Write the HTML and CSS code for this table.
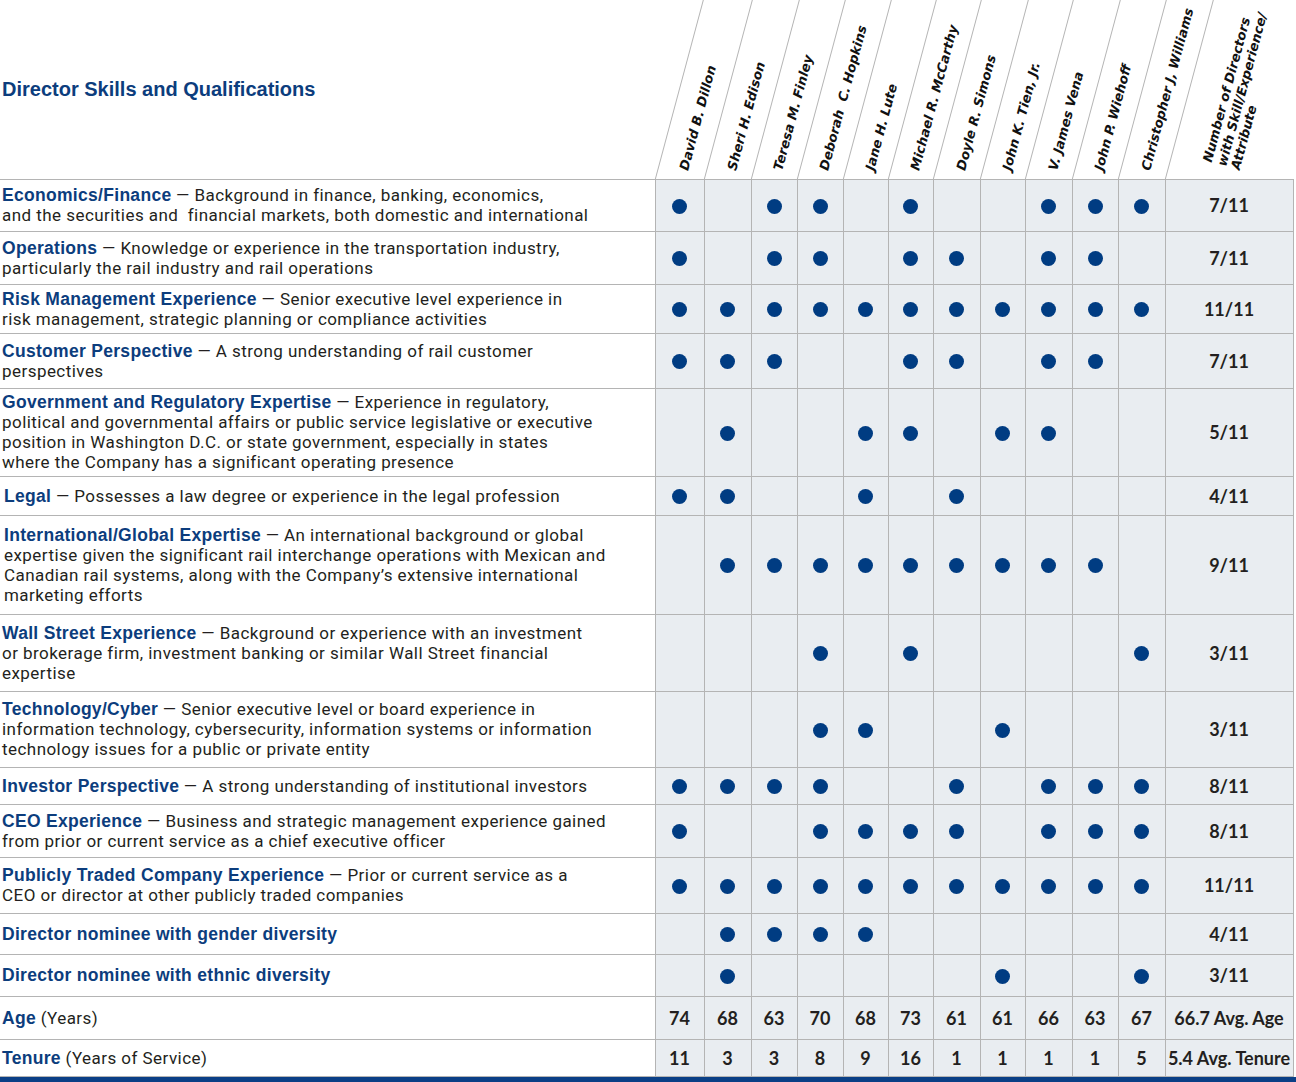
FILE: index.html
```html
<!DOCTYPE html>
<html lang="en">
<head>
<meta charset="utf-8">
<title>Director Skills and Qualifications</title>
<link rel="stylesheet" href="styles.css">
</head>
<body>
<table class="matrix">
  <colgroup>
    <col class="w-lab">
    <col class="w49"><col class="w47"><col class="w46"><col class="w46"><col class="w45"><col class="w45"><col class="w47"><col class="w45"><col class="w47"><col class="w46"><col class="w47">
    <col class="w-cnt">
  </colgroup>
  <thead>
    <tr class="head">
      <th class="title">Director Skills and Qualifications</th>
      <th class="dir"><div class="nm">David B. Dillon</div></th>
      <th class="dir"><div class="nm">Sheri H. Edison</div></th>
      <th class="dir"><div class="nm">Teresa M. Finley</div></th>
      <th class="dir"><div class="nm">Deborah&nbsp; C. Hopkins</div></th>
      <th class="dir"><div class="nm">Jane H. Lute</div></th>
      <th class="dir"><div class="nm">Michael R. McCarthy</div></th>
      <th class="dir"><div class="nm">Doyle R. Simons</div></th>
      <th class="dir"><div class="nm">John K. Tien, Jr.</div></th>
      <th class="dir"><div class="nm">V. James Vena</div></th>
      <th class="dir"><div class="nm">John P. Wiehoff</div></th>
      <th class="dir"><div class="nm">Christopher J, Williams</div></th>
      <th class="dir cnt-h"><div class="nm multi">Number of Directors<br>with Skill/Experience/<br>Attribute</div></th>
    </tr>
  </thead>
  <tbody>
    <tr class="h52">
      <td class="lab"><b>Economics/Finance</b> — Background in finance, banking, economics,<br>and the securities and&nbsp; financial markets, both domestic and international</td>
      <td class="c"><i class="dot"></i></td><td class="c"></td><td class="c"><i class="dot"></i></td><td class="c"><i class="dot"></i></td><td class="c"></td><td class="c"><i class="dot"></i></td><td class="c"></td><td class="c"></td><td class="c"><i class="dot"></i></td><td class="c"><i class="dot"></i></td><td class="c"><i class="dot"></i></td>
      <td class="c n">7/11</td>
    </tr>
    <tr class="h53">
      <td class="lab"><b>Operations</b> — Knowledge or experience in the transportation industry,<br>particularly the rail industry and rail operations</td>
      <td class="c"><i class="dot"></i></td><td class="c"></td><td class="c"><i class="dot"></i></td><td class="c"><i class="dot"></i></td><td class="c"></td><td class="c"><i class="dot"></i></td><td class="c"><i class="dot"></i></td><td class="c"></td><td class="c"><i class="dot"></i></td><td class="c"><i class="dot"></i></td><td class="c"></td>
      <td class="c n">7/11</td>
    </tr>
    <tr class="h49">
      <td class="lab"><b>Risk Management Experience</b> — Senior executive level experience in<br>risk management, strategic planning or compliance activities</td>
      <td class="c"><i class="dot"></i></td><td class="c"><i class="dot"></i></td><td class="c"><i class="dot"></i></td><td class="c"><i class="dot"></i></td><td class="c"><i class="dot"></i></td><td class="c"><i class="dot"></i></td><td class="c"><i class="dot"></i></td><td class="c"><i class="dot"></i></td><td class="c"><i class="dot"></i></td><td class="c"><i class="dot"></i></td><td class="c"><i class="dot"></i></td>
      <td class="c n">11/11</td>
    </tr>
    <tr class="h55">
      <td class="lab"><b>Customer Perspective</b> — A strong understanding of rail customer<br>perspectives</td>
      <td class="c"><i class="dot"></i></td><td class="c"><i class="dot"></i></td><td class="c"><i class="dot"></i></td><td class="c"></td><td class="c"></td><td class="c"><i class="dot"></i></td><td class="c"><i class="dot"></i></td><td class="c"></td><td class="c"><i class="dot"></i></td><td class="c"><i class="dot"></i></td><td class="c"></td>
      <td class="c n">7/11</td>
    </tr>
    <tr class="h88">
      <td class="lab"><b>Government and Regulatory Expertise</b> — Experience in regulatory,<br>political and governmental affairs or public service legislative or executive<br>position in Washington D.C. or state government, especially in states<br>where the Company has a significant operating presence</td>
      <td class="c"></td><td class="c"><i class="dot"></i></td><td class="c"></td><td class="c"></td><td class="c"><i class="dot"></i></td><td class="c"><i class="dot"></i></td><td class="c"></td><td class="c"><i class="dot"></i></td><td class="c"><i class="dot"></i></td><td class="c"></td><td class="c"></td>
      <td class="c n">5/11</td>
    </tr>
    <tr class="h39">
      <td class="lab ind"><b>Legal</b> — Possesses a law degree or experience in the legal profession</td>
      <td class="c"><i class="dot"></i></td><td class="c"><i class="dot"></i></td><td class="c"></td><td class="c"></td><td class="c"><i class="dot"></i></td><td class="c"></td><td class="c"><i class="dot"></i></td><td class="c"></td><td class="c"></td><td class="c"></td><td class="c"></td>
      <td class="c n">4/11</td>
    </tr>
    <tr class="h99">
      <td class="lab ind"><b>International/Global Expertise</b> — An international background or global<br>expertise given the significant rail interchange operations with Mexican and<br>Canadian rail systems, along with the Company’s extensive international<br>marketing efforts</td>
      <td class="c"></td><td class="c"><i class="dot"></i></td><td class="c"><i class="dot"></i></td><td class="c"><i class="dot"></i></td><td class="c"><i class="dot"></i></td><td class="c"><i class="dot"></i></td><td class="c"><i class="dot"></i></td><td class="c"><i class="dot"></i></td><td class="c"><i class="dot"></i></td><td class="c"><i class="dot"></i></td><td class="c"></td>
      <td class="c n">9/11</td>
    </tr>
    <tr class="h77">
      <td class="lab"><b>Wall Street Experience</b> — Background or experience with an investment<br>or brokerage firm, investment banking or similar Wall Street financial<br>expertise</td>
      <td class="c"></td><td class="c"></td><td class="c"></td><td class="c"><i class="dot"></i></td><td class="c"></td><td class="c"><i class="dot"></i></td><td class="c"></td><td class="c"></td><td class="c"></td><td class="c"></td><td class="c"><i class="dot"></i></td>
      <td class="c n">3/11</td>
    </tr>
    <tr class="h76">
      <td class="lab"><b>Technology/Cyber</b> — Senior executive level or board experience in<br>information technology, cybersecurity, information systems or information<br>technology issues for a public or private entity</td>
      <td class="c"></td><td class="c"></td><td class="c"></td><td class="c"><i class="dot"></i></td><td class="c"><i class="dot"></i></td><td class="c"></td><td class="c"></td><td class="c"><i class="dot"></i></td><td class="c"></td><td class="c"></td><td class="c"></td>
      <td class="c n">3/11</td>
    </tr>
    <tr class="h37">
      <td class="lab"><b>Investor Perspective</b> — A strong understanding of institutional investors</td>
      <td class="c"><i class="dot"></i></td><td class="c"><i class="dot"></i></td><td class="c"><i class="dot"></i></td><td class="c"><i class="dot"></i></td><td class="c"></td><td class="c"></td><td class="c"><i class="dot"></i></td><td class="c"></td><td class="c"><i class="dot"></i></td><td class="c"><i class="dot"></i></td><td class="c"><i class="dot"></i></td>
      <td class="c n">8/11</td>
    </tr>
    <tr class="h53">
      <td class="lab"><b>CEO Experience</b> — Business and strategic management experience gained<br>from prior or current service as a chief executive officer</td>
      <td class="c"><i class="dot"></i></td><td class="c"></td><td class="c"></td><td class="c"><i class="dot"></i></td><td class="c"><i class="dot"></i></td><td class="c"><i class="dot"></i></td><td class="c"><i class="dot"></i></td><td class="c"></td><td class="c"><i class="dot"></i></td><td class="c"><i class="dot"></i></td><td class="c"><i class="dot"></i></td>
      <td class="c n">8/11</td>
    </tr>
    <tr class="h56">
      <td class="lab"><b>Publicly Traded Company Experience</b> — Prior or current service as a<br>CEO or director at other publicly traded companies</td>
      <td class="c"><i class="dot"></i></td><td class="c"><i class="dot"></i></td><td class="c"><i class="dot"></i></td><td class="c"><i class="dot"></i></td><td class="c"><i class="dot"></i></td><td class="c"><i class="dot"></i></td><td class="c"><i class="dot"></i></td><td class="c"><i class="dot"></i></td><td class="c"><i class="dot"></i></td><td class="c"><i class="dot"></i></td><td class="c"><i class="dot"></i></td>
      <td class="c n">11/11</td>
    </tr>
    <tr class="h41">
      <td class="lab"><b>Director nominee with gender diversity</b></td>
      <td class="c"></td><td class="c"><i class="dot"></i></td><td class="c"><i class="dot"></i></td><td class="c"><i class="dot"></i></td><td class="c"><i class="dot"></i></td><td class="c"></td><td class="c"></td><td class="c"></td><td class="c"></td><td class="c"></td><td class="c"></td>
      <td class="c n">4/11</td>
    </tr>
    <tr class="h42">
      <td class="lab"><b>Director nominee with ethnic diversity</b></td>
      <td class="c"></td><td class="c"><i class="dot"></i></td><td class="c"></td><td class="c"></td><td class="c"></td><td class="c"></td><td class="c"></td><td class="c"><i class="dot"></i></td><td class="c"></td><td class="c"></td><td class="c"><i class="dot"></i></td>
      <td class="c n">3/11</td>
    </tr>
    <tr class="h43">
      <td class="lab"><b>Age</b> (Years)</td>
      <td class="c v">74</td><td class="c v">68</td><td class="c v">63</td><td class="c v">70</td><td class="c v">68</td><td class="c v">73</td><td class="c v">61</td><td class="c v">61</td><td class="c v">66</td><td class="c v">63</td><td class="c v">67</td>
      <td class="c n avg">66.7 Avg. Age</td>
    </tr>
    <tr class="h37">
      <td class="lab"><b>Tenure</b> (Years of Service)</td>
      <td class="c v">11</td><td class="c v">3</td><td class="c v">3</td><td class="c v">8</td><td class="c v">9</td><td class="c v">16</td><td class="c v">1</td><td class="c v">1</td><td class="c v">1</td><td class="c v">1</td><td class="c v">5</td>
      <td class="c n avg">5.4 Avg. Tenure</td>
    </tr>
  </tbody>
</table>
<div class="rule"></div>
</body>
</html>
```
FILE: styles.css
```css
html, body {
  margin: 0;
  padding: 0;
  background: #ffffff;
}
body {
  width: 1296px;
  font-family: Roboto, "Liberation Sans", sans-serif;
  color: #231f20;
}
.matrix {
  border-collapse: collapse;
  table-layout: fixed;
  width: 1293px;
}
.w-lab { width: 655px; }
.w45 { width: 45px; }
.w46 { width: 46px; }
.w47 { width: 47px; }
.w49 { width: 49px; }
.w-cnt { width: 128px; }

.head { height: 179px; }
.head th {
  padding: 0;
  border-bottom: 1px solid #b4b4b4;
}
.title {
  text-align: left;
  vertical-align: middle;
  padding-left: 2px !important;
  font: 700 20px "Liberation Sans", Arial, sans-serif;
  color: #0c3d7d;
}
.dir {
  position: relative;
  vertical-align: bottom;
  text-align: left;
}
.dir::before {
  content: "";
  position: absolute;
  left: 0;
  top: 0;
  bottom: 0;
  border-left: 1px solid #b4b4b4;
  transform: skewX(-15deg);
  transform-origin: 0 100%;
}
.nm {
  width: 0;
  white-space: nowrap;
  margin-left: calc(50% + 11px);
  margin-bottom: 7px;
  line-height: 14px;
  font: italic 700 13px "DejaVu Sans", Verdana, sans-serif;
  color: #111111;
  transform: rotate(-75deg);
  transform-origin: 0 100%;
}
.nm.multi {
  margin-left: 78px;
  line-height: 14.5px;
}

tbody td {
  border: 1px solid #b4b4b4;
  padding: 0;
}
tbody td.lab {
  border-left: none;
  padding: 0 4px 0 2px;
  font-size: 17px;
  letter-spacing: 0.45px;
  line-height: 20px;
  white-space: nowrap;
  vertical-align: middle;
}
tbody td.lab.ind { padding-left: 4px; }
.lab b {
  font-family: "Liberation Sans", Arial, sans-serif;
  font-size: 17.5px;
  letter-spacing: 0.3px;
  color: #0c3d7d;
  font-weight: 700;
}
td.c {
  background: #e9edf1;
  text-align: center;
  vertical-align: middle;
}
.dot {
  display: inline-block;
  width: 15px;
  height: 15px;
  border-radius: 50%;
  background: #003c82;
  vertical-align: middle;
}
td.n, td.v {
  font: 700 18px Lato, Roboto, sans-serif;
  color: #231f20;
}
td.avg { white-space: nowrap; }

.h37 { height: 37px; }
.h39 { height: 39px; }
.h41 { height: 41px; }
.h42 { height: 42px; }
.h43 { height: 43px; }
.h49 { height: 49px; }
.h52 { height: 52px; }
.h53 { height: 53px; }
.h55 { height: 55px; }
.h56 { height: 56px; }
.h76 { height: 76px; }
.h77 { height: 77px; }
.h88 { height: 88px; }
.h99 { height: 99px; }

.rule {
  height: 6px;
  background: #0a3f86;
}
```
